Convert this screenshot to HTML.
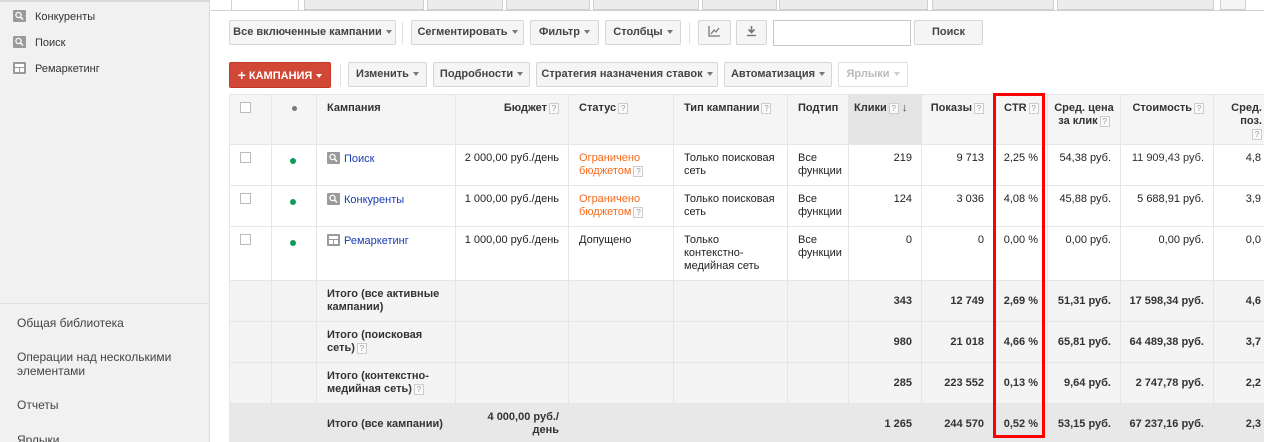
<!DOCTYPE html>
<html><head><meta charset="utf-8"><style>
*{box-sizing:border-box;margin:0;padding:0}
body{width:1264px;height:442px;overflow:hidden;background:#fff;font-family:"Liberation Sans",Arial,sans-serif;font-size:11px;color:#222;position:relative}
.a{position:absolute}
#side{left:0;top:0;width:210px;height:442px;background:#f1f1f1;border-right:1px solid #dcdcdc;border-top:2px solid #dadada;overflow:hidden}
.si{position:absolute;left:35px;font-size:11px;color:#333}
.ic{position:absolute;left:13px;width:13px;height:12px;background:#9a9a9a;border-radius:1px}
.bl{position:absolute;left:17px;font-size:12px;color:#444;line-height:14px}
.tab{position:absolute;top:-2px;height:12px;background:#ececec;border:1px solid #d0d0d0;border-top:none;overflow:hidden}
.btn{position:absolute;height:25px;background:#f5f5f5;border:1px solid #d6d6d6;border-radius:2px;font-weight:bold;color:#444;font-size:11px;line-height:23px;text-align:center;white-space:nowrap}
.ar{display:inline-block;width:0;height:0;border-left:3px solid transparent;border-right:3px solid transparent;border-top:4px solid #777;vertical-align:middle;margin-left:4px}
.sep{position:absolute;width:1px;background:#e0e0e0}
#wrap{position:absolute;left:229px;top:94px;width:1035px;height:348px;overflow:hidden}
table{border-collapse:collapse;table-layout:fixed;width:1095px}
td,th{border:1px solid #e6e6e6;vertical-align:top;padding:7px 5px 0 10px;font-size:11px;line-height:13px;overflow:hidden;white-space:nowrap}
th{background:#f5f5f5;font-weight:bold;color:#333;text-align:left;height:50px}
.r{text-align:right;padding-right:9px;padding-left:2px}
.q{display:inline-block;width:10px;height:11px;border:1px solid #ccc;background:#fafafa;color:#999;font-size:8px;line-height:9px;text-align:center;vertical-align:middle;font-weight:normal;margin-left:2px}
.t td{background:#f4f4f4;font-weight:bold;color:#333}
.t2 td{background:#e8e8e8;font-weight:bold;color:#333}
.lk{color:#1a3cb5}
.or{color:#f56a1d}
.cb{display:inline-block;width:11px;height:11px;border:1px solid #bbb;background:#fff}
.dot{display:inline-block;width:6px;height:6px;border-radius:3px;background:#0c9d58;margin:6px 0 0 8px}
.mi{display:inline-block;width:13px;height:12px;background:#9a9a9a;vertical-align:-2px;margin-right:4px;border-radius:1px}
.mi svg{display:block}
</style></head><body>
<div id="side" class="a">
<div class="ic" style="top:8px"><svg width="13" height="12"><circle cx="5.5" cy="5" r="2.6" fill="none" stroke="#fff" stroke-width="1.3"/><path d="M7.5 7 L10 9.5" stroke="#fff" stroke-width="1.5"/></svg></div>
<div class="si" style="top:9px">Конкуренты</div>
<div class="ic" style="top:34px"><svg width="13" height="12"><circle cx="5.5" cy="5" r="2.6" fill="none" stroke="#fff" stroke-width="1.3"/><path d="M7.5 7 L10 9.5" stroke="#fff" stroke-width="1.5"/></svg></div>
<div class="si" style="top:35px">Поиск</div>
<div class="ic" style="top:60px"><svg width="13" height="12"><rect x="2" y="2" width="9" height="3" fill="#fff"/><rect x="2" y="6" width="4" height="4" fill="#fff"/><rect x="7" y="6" width="4" height="4" fill="#fff"/></svg></div>
<div class="si" style="top:61px">Ремаркетинг</div>
<div class="a" style="left:0;top:301px;width:209px;height:1px;background:#e2e2e2"></div>
<div class="bl" style="top:314px">Общая библиотека</div>
<div class="bl" style="top:348px">Операции над несколькими<br>элементами</div>
<div class="bl" style="top:396px">Отчеты</div>
<div class="bl" style="top:431px">Ярлыки</div>
</div>
<div class="a" style="left:211px;top:10px;width:1053px;height:1px;background:#d0d0d0"></div>
<div class="tab" style="left:231px;width:68px;background:#fff;height:13px"></div>
<div class="tab" style="left:304px;width:120px"></div>
<div class="tab" style="left:427px;width:76px"></div>
<div class="tab" style="left:506px;width:84px"></div>
<div class="tab" style="left:593px;width:106px"></div>
<div class="tab" style="left:702px;width:75px"></div>
<div class="tab" style="left:779px;width:149px"></div>
<div class="tab" style="left:932px;width:122px"></div>
<div class="tab" style="left:1057px;width:157px"></div>
<div class="tab" style="left:1220px;width:26px;background:#f5f5f5"></div>

<div class="btn" style="left:229px;top:20px;width:167px">Все включенные кампании<span class="ar"></span></div>
<div class="sep" style="left:402px;top:22px;height:22px"></div>
<div class="btn" style="left:411px;top:20px;width:113px">Сегментировать<span class="ar"></span></div>
<div class="btn" style="left:530px;top:20px;width:69px">Фильтр<span class="ar"></span></div>
<div class="btn" style="left:605px;top:20px;width:76px">Столбцы<span class="ar"></span></div>
<div class="sep" style="left:689px;top:22px;height:22px"></div>
<div class="btn" style="left:698px;top:20px;width:33px"><svg width="13" height="12" style="vertical-align:-2px"><path d="M1 1V11H12" fill="none" stroke="#777" stroke-width="1.3"/><path d="M3 9L6 5L8 7L11 3" fill="none" stroke="#777" stroke-width="1.2"/></svg></div>
<div class="btn" style="left:736px;top:20px;width:31px"><svg width="11" height="12" style="vertical-align:-2px"><path d="M5.5 1V7M2.5 4.5L5.5 7.5L8.5 4.5" fill="none" stroke="#777" stroke-width="1.6"/><path d="M1 10.5H10" stroke="#777" stroke-width="1.4"/></svg></div>
<div class="a" style="left:773px;top:20px;width:138px;height:26px;border:1px solid #c8c8c8;background:#fff"></div>
<div class="btn" style="left:914px;top:20px;width:69px">Поиск</div>

<div class="btn" style="left:229px;top:62px;width:102px;height:26px;background:#d14836;border-color:#c53727;color:#fff;line-height:24px"><b style="font-size:14px;vertical-align:-1px">+</b> КАМПАНИЯ<span class="ar" style="border-top-color:#fff"></span></div>
<div class="sep" style="left:340px;top:64px;height:22px"></div>
<div class="btn" style="left:348px;top:62px;width:79px">Изменить<span class="ar"></span></div>
<div class="btn" style="left:433px;top:62px;width:97px">Подробности<span class="ar"></span></div>
<div class="btn" style="left:536px;top:62px;width:182px">Стратегия назначения ставок<span class="ar"></span></div>
<div class="btn" style="left:724px;top:62px;width:108px">Автоматизация<span class="ar"></span></div>
<div class="btn" style="left:838px;top:62px;width:70px;background:#fff;color:#bbb;border-color:#e0e0e0">Ярлыки<span class="ar" style="border-top-color:#ccc"></span></div>

<div id="wrap"><table>
<colgroup><col style="width:42px"><col style="width:45px"><col style="width:139px"><col style="width:113px"><col style="width:105px"><col style="width:114px"><col style="width:61px"><col style="width:73px"><col style="width:72px"><col style="width:54px"><col style="width:73px"><col style="width:93px"><col style="width:116px"></colgroup>
<tr><th><span class="cb"></span></th><th style="text-align:center;padding-left:5px"><span style="display:inline-block;width:5px;height:5px;border-radius:3px;background:#777"></span></th><th>Кампания</th><th class="r">Бюджет<span class="q">?</span></th><th>Статус<span class="q">?</span></th><th>Тип кампании<span class="q">?</span></th><th>Подтип</th><th style="background:#e4e4e4;padding-left:5px">Клики<span class="q">?</span> <b style="color:#444">↓</b></th><th class="r">Показы<span class="q">?</span></th><th>CTR<span class="q">?</span></th><th style="text-align:center;padding-left:2px;padding-right:2px">Сред. цена<br>за клик<span class="q">?</span></th><th class="r">Стоимость<span class="q">?</span></th><th style="padding-left:10px;text-align:left"><div style="width:38px;text-align:right">Сред.<br>поз.<br><span class="q">?</span></div></th></tr>
<tr style="height:41px"><td><span class="cb"></span></td><td><span class="dot"></span></td><td><span class="mi"><svg width="13" height="12"><circle cx="5.5" cy="5" r="2.6" fill="none" stroke="#fff" stroke-width="1.3"/><path d="M7.5 7 L10 9.5" stroke="#fff" stroke-width="1.5"/></svg></span><span class="lk">Поиск</span></td><td class="r">2 000,00 руб./день</td><td class="or">Ограничено<br>бюджетом<span class="q">?</span></td><td>Только поисковая<br>сеть</td><td>Все<br>функции</td><td class="r">219</td><td class="r">9 713</td><td class="r">2,25 %</td><td class="r">54,38 руб.</td><td class="r" style="color:#333">11 909,43 руб.</td><td style="padding-left:12px"><div style="width:35px;text-align:right">4,8</div></td></tr>
<tr style="height:41px"><td><span class="cb"></span></td><td><span class="dot"></span></td><td><span class="mi"><svg width="13" height="12"><circle cx="5.5" cy="5" r="2.6" fill="none" stroke="#fff" stroke-width="1.3"/><path d="M7.5 7 L10 9.5" stroke="#fff" stroke-width="1.5"/></svg></span><span class="lk">Конкуренты</span></td><td class="r">1 000,00 руб./день</td><td class="or">Ограничено<br>бюджетом<span class="q">?</span></td><td>Только поисковая<br>сеть</td><td>Все<br>функции</td><td class="r">124</td><td class="r">3 036</td><td class="r">4,08 %</td><td class="r">45,88 руб.</td><td class="r">5 688,91 руб.</td><td style="padding-left:12px"><div style="width:35px;text-align:right">3,9</div></td></tr>
<tr style="height:54px"><td><span class="cb"></span></td><td><span class="dot"></span></td><td><span class="mi"><svg width="13" height="12"><rect x="2" y="2" width="9" height="3" fill="#fff"/><rect x="2" y="6" width="4" height="4" fill="#fff"/><rect x="7" y="6" width="4" height="4" fill="#fff"/></svg></span><span class="lk">Ремаркетинг</span></td><td class="r">1 000,00 руб./день</td><td>Допущено</td><td>Только<br>контекстно-<br>медийная сеть</td><td>Все<br>функции</td><td class="r">0</td><td class="r">0</td><td class="r">0,00 %</td><td class="r">0,00 руб.</td><td class="r">0,00 руб.</td><td style="padding-left:12px"><div style="width:35px;text-align:right">0,0</div></td></tr>
<tr class="t" style="height:41px"><td></td><td></td><td>Итого (все активные<br>кампании)</td><td></td><td></td><td></td><td></td><td class="r" style="padding-top:14px">343</td><td class="r" style="padding-top:14px">12 749</td><td class="r" style="padding-top:14px">2,69 %</td><td class="r" style="padding-top:14px">51,31 руб.</td><td class="r" style="padding-top:14px">17 598,34 руб.</td><td style="padding:14px 0 0 12px"><div style="width:35px;text-align:right">4,6</div></td></tr>
<tr class="t" style="height:41px"><td></td><td></td><td>Итого (поисковая<br>сеть)<span class="q">?</span></td><td></td><td></td><td></td><td></td><td class="r" style="padding-top:14px">980</td><td class="r" style="padding-top:14px">21 018</td><td class="r" style="padding-top:14px">4,66 %</td><td class="r" style="padding-top:14px">65,81 руб.</td><td class="r" style="padding-top:14px">64 489,38 руб.</td><td style="padding:14px 0 0 12px"><div style="width:35px;text-align:right">3,7</div></td></tr>
<tr class="t" style="height:41px"><td></td><td></td><td>Итого (контекстно-<br>медийная сеть)<span class="q">?</span></td><td></td><td></td><td></td><td></td><td class="r" style="padding-top:14px">285</td><td class="r" style="padding-top:14px">223 552</td><td class="r" style="padding-top:14px">0,13 %</td><td class="r" style="padding-top:14px">9,64 руб.</td><td class="r" style="padding-top:14px">2 747,78 руб.</td><td style="padding:14px 0 0 12px"><div style="width:35px;text-align:right">2,2</div></td></tr>
<tr class="t2" style="height:42px"><td></td><td></td><td style="padding-top:14px">Итого (все кампании)</td><td class="r">4 000,00 руб./<br>день</td><td></td><td></td><td></td><td class="r" style="padding-top:14px">1 265</td><td class="r" style="padding-top:14px">244 570</td><td class="r" style="padding-top:14px">0,52 %</td><td class="r" style="padding-top:14px">53,15 руб.</td><td class="r" style="padding-top:14px">67 237,16 руб.</td><td style="padding:14px 0 0 12px"><div style="width:35px;text-align:right">2,3</div></td></tr>
</table></div>
<div class="a" style="left:993px;top:93px;width:52px;height:345px;border:3px solid #f00"></div>
</body></html>
